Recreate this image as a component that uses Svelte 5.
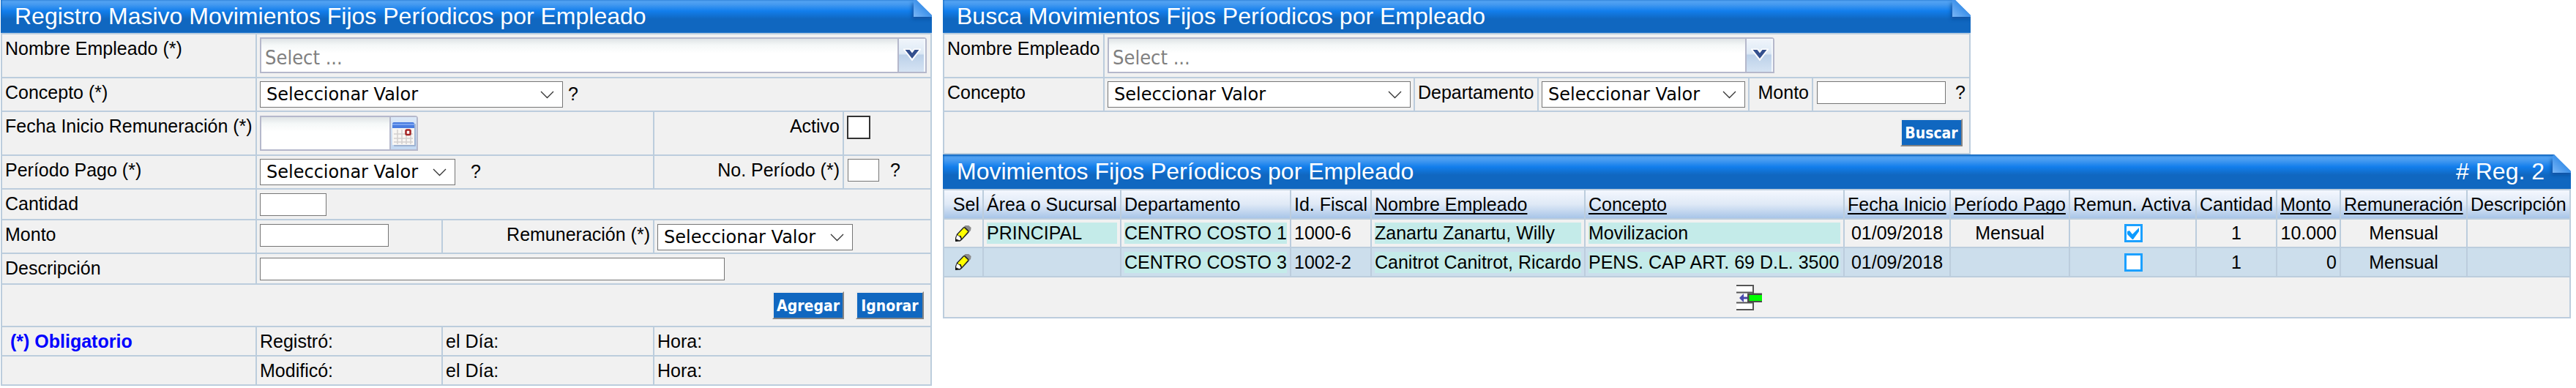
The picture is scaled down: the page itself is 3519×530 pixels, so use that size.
<script lang="ts">
  type Column = { key: string; label: string; sortable?: boolean; align?: string; marked?: boolean }

  const columns: Column[] = [
    { key: 'sucursal', label: 'Área o Sucursal', marked: true },
    { key: 'departamento', label: 'Departamento', marked: true },
    { key: 'fiscal', label: 'Id. Fiscal' },
    { key: 'empleado', label: 'Nombre Empleado', sortable: true, marked: true },
    { key: 'concepto', label: 'Concepto', sortable: true, marked: true },
    { key: 'inicio', label: 'Fecha Inicio', sortable: true, align: 'center' },
    { key: 'periodo', label: 'Período Pago', sortable: true, align: 'center' },
    { key: 'activa', label: 'Remun. Activa', align: 'center' },
    { key: 'cantidad', label: 'Cantidad', align: 'center' },
    { key: 'monto', label: 'Monto', sortable: true, align: 'right' },
    { key: 'remuneracion', label: 'Remuneración', sortable: true, align: 'center' },
    { key: 'descripcion', label: 'Descripción' },
  ]

  const rows: Record<string, string | boolean>[] = [
    {
      sucursal: 'PRINCIPAL', departamento: 'CENTRO COSTO 1', fiscal: '1000-6',
      empleado: 'Zanartu Zanartu, Willy', concepto: 'Movilizacion', inicio: '01/09/2018',
      periodo: 'Mensual', activa: true, cantidad: '1', monto: '10.000',
      remuneracion: 'Mensual', descripcion: '',
    },
    {
      sucursal: '', departamento: 'CENTRO COSTO 3', fiscal: '1002-2',
      empleado: 'Canitrot Canitrot, Ricardo', concepto: 'PENS. CAP ART. 69 D.L. 3500', inicio: '01/09/2018',
      periodo: '', activa: false, cantidad: '1', monto: '0',
      remuneracion: 'Mensual', descripcion: '',
    },
  ]
</script>

{#snippet fold()}
  <svg class="fold" width="42" height="40" viewBox="-17 0 42 40">
    <defs>
      <linearGradient id="fold-face" x1="1" y1="0" x2="0" y2="1">
        <stop offset="0.3" stop-color="#2b86e6" />
        <stop offset="1" stop-color="#7ab6f6" />
      </linearGradient>
      <filter id="fold-shadow" x="-50%" y="-50%" width="200%" height="200%">
        <feGaussianBlur stdDeviation="2.5" />
      </filter>
    </defs>
    <path d="M-2 5V28H25V22Z" fill="#084a94" opacity=".75" filter="url(#fold-shadow)" />
    <path d="M2 0H25V23Z" fill="#fff" />
    <path d="M0 2L2 0L25 23V25H0Z" fill="url(#fold-face)" />
  </svg>
{/snippet}

{#snippet dropdown(size: string)}
  <div class="select {size}" role="combobox" aria-expanded="false" aria-controls="values" tabindex="0">
    <span>Seleccionar Valor</span>
    <svg width="19" height="11" viewBox="0 0 19 11">
      <path d="M1 1L9.5 9.5L18 1" fill="none" stroke="#333" stroke-width="1.3" />
    </svg>
  </div>
{/snippet}

{#snippet combo()}
  <div class="combo">
    <span class="combo-text">Select ...</span>
    <span class="combo-arrow">
      <svg width="24" height="18" viewBox="0 0 24 18">
        <path d="M2 2H9L12 6L15 2H22L12 15Z" fill="#fff" stroke="#fff" stroke-width="3" />
        <path d="M2.5 2H8.5L12 6.5L15.5 2H21.5L12 14Z" fill="#34508e" />
      </svg>
    </span>
  </div>
{/snippet}

{#snippet pencil()}
  <svg width="24" height="24" viewBox="26 22 72 72">
    <path d="M62 32L70 25L84 25L94 34L92 46L84 54Z" fill="#8b8b8b" />
    <path d="M35 60L62 32L69 32L84 46V54L56 84L48 90H29V75Z" fill="#222" />
    <path d="M40 61L65 35L81 50L56 78L52 67L41 66Z" fill="#ffff00" />
    <path d="M36 65L47 71L52 81L46 86L32 80Z" fill="#fff" />
    <path d="M29 79L39 90H29Z" fill="#111" />
  </svg>
{/snippet}

<main class="page">
  <section class="panel">
    <h2 class="title clipped">Registro Masivo Movimientos Fijos Períodicos por Empleado{@render fold()}</h2>
    <div class="grid form">
      <div class="cell">Nombre Empleado (*)</div>
      <div class="cell field span4">{@render combo()}</div>

      <div class="cell">Concepto (*)</div>
      <div class="cell field span4 with-help">{@render dropdown('w-414')}<span class="help">?</span></div>

      <div class="cell">Fecha Inicio Remuneración (*)</div>
      <div class="cell field low span2">
        <div class="date">
          <span class="date-text"></span>
          <span class="date-button">
            <svg width="32" height="33" viewBox="0 0 32 33">
              <rect x="2" y="2" width="30" height="31" rx="1" fill="#8297bc" opacity=".6" />
              <rect x="0" y="0" width="30" height="31" fill="#f8f6f3" />
              <path d="M0 8H30V2Q30 0 28 0H2Q0 0 0 2Z" fill="#4a7de0" />
              <path d="M0 3H30" stroke="#7ba4f2" stroke-width="2" />
              <path d="M2 16H28M2 22H28M2 27H28M7 10V30M13 10V30M19 10V30M25 10V30" stroke="#d2d0cf" stroke-width="1.5" />
              <rect x="18.5" y="10.5" width="6" height="6.5" rx="1.5" fill="#fff" stroke="#a52424" stroke-width="2.5" />
            </svg>
          </span>
        </div>
      </div>
      <div class="cell right">Activo</div>
      <div class="cell field low"><span class="check-native"></span></div>

      <div class="cell">Período Pago (*)</div>
      <div class="cell field span2 with-help far">{@render dropdown('w-267')}<span class="help">?</span></div>
      <div class="cell right">No. Período (*)</div>
      <div class="cell field input-help"><span class="input w-43"></span><span class="help">?</span></div>

      <div class="cell">Cantidad</div>
      <div class="cell field low span4"><span class="input w-91"></span></div>

      <div class="cell">Monto</div>
      <div class="cell field low"><span class="input w-176"></span></div>
      <div class="cell right">Remuneración (*)</div>
      <div class="cell field low span2">{@render dropdown('w-267')}</div>

      <div class="cell">Descripción</div>
      <div class="cell field low span4"><span class="input w-635"></span></div>

      <div class="cell actions span5">
        <button class="btn">Agregar</button>
        <button class="btn w-93">Ignorar</button>
      </div>

      <div class="cell required">(*) Obligatorio</div>
      <div class="cell">Registró:</div>
      <div class="cell">el Día:</div>
      <div class="cell span2">Hora:</div>

      <div class="cell"></div>
      <div class="cell">Modificó:</div>
      <div class="cell">el Día:</div>
      <div class="cell span2">Hora:</div>
    </div>
  </section>

  <div class="side">
    <section class="panel search-panel">
      <h2 class="title clipped">Busca Movimientos Fijos Períodicos por Empleado{@render fold()}</h2>
      <div class="grid search">
        <div class="cell">Nombre Empleado</div>
        <div class="cell field span5">{@render combo()}</div>

        <div class="cell">Concepto</div>
        <div class="cell field">{@render dropdown('w-414')}</div>
        <div class="cell">Departamento</div>
        <div class="cell field">{@render dropdown('w-278')}</div>
        <div class="cell right">Monto</div>
        <div class="cell field input-help roomy"><span class="input w-176"></span><span class="help">?</span></div>

        <div class="cell actions span6">
          <button class="btn w-85">Buscar</button>
        </div>
      </div>
    </section>

    <section class="panel">
      <h2 class="title">Movimientos Fijos Períodicos por Empleado<span class="count"># Reg. 2</span>{@render fold()}</h2>
      <div class="grid results">
        <div class="cell head right">Sel</div>
        {#each columns as col}
          <div class="cell head"><span class:sortable={col.sortable}>{col.label}</span></div>
        {/each}

        {#each rows as row, i}
          <div class="cell data center" class:alt={i % 2 === 1}>{@render pencil()}</div>
          {#each columns as col}
            <div class="cell data {col.align ?? ''}" class:alt={i % 2 === 1}>
              {#if col.key === 'activa'}
                <span class="check">
                  {#if row.activa}
                    <svg width="19" height="19" viewBox="0 0 19 19">
                      <path d="M1 7L4 6L8 11L17 2V7L9 18H8L1 11Z" fill="#0d9bff" />
                    </svg>
                  {/if}
                </span>
              {:else if col.marked && row[col.key]}
                <span class="marked">{row[col.key]}</span>
              {:else}
                <span>{row[col.key]}</span>
              {/if}
            </div>
          {/each}
        {/each}

        <div class="cell foot">
          <svg width="35" height="35" viewBox="0 0 35 35">
            <path d="M0 1H23V34H0V24H23V11H0Z" fill="#fff" />
            <path d="M0 1H23V10.500H0M0 34H23V24.500H0M23 10V25" fill="none" stroke="#555" stroke-width="2" />
            <path d="M10 12H15V23H10Z" fill="#fff" />
            <path d="M4 18L10 12V16.500H16V19.500H10V24Z" fill="#4a49ac" />
            <rect x="15" y="11.5" width="22" height="12.5" fill="#4a4a4a" />
            <rect x="17.5" y="14" width="20" height="8" fill="#00ff00" />
          </svg>
        </div>
      </div>
    </section>
  </div>
</main>

<style>
  :global(body) { background: #fff; }

  .page {
    display: grid;
    grid-template-columns: 1272px 2224px;
    gap: 15px;
    align-items: start;
    padding-left: 1px;
    font: 25px/28px "Liberation Sans", Arial, sans-serif;
    color: #000;
    white-space: nowrap;
  }
  .search-panel { width: 1404px; }

  /* title bars */
  .title {
    position: relative;
    overflow: hidden;
    box-sizing: border-box;
    display: flex;
    justify-content: space-between;
    height: 47px;
    margin: 0;
    padding: 0 36px 0 19px;
    background: linear-gradient(#1067c0 0, #1067c0 1px, #3487dc 2px, #52a2f2 4px, #459af0 8px, #127eec 17px, #1067c0 28px);
    box-shadow: inset 2px 0 #1067c080;
    color: #fff;
    font-size: 32px;
    font-weight: normal;
    line-height: 46px;
  }
  .title.clipped {
    height: 45px;
    background-position: 0 -2px;
    line-height: 44px;
  }
  .fold {
    position: absolute;
    top: 0;
    right: 0;
  }
  .clipped .fold { top: -2px; }

  /* bordered grids */
  .grid {
    display: grid;
    gap: 2px;
    padding: 2px;
    background: #bccddd;
  }
  .form {
    grid-template-columns: 346px 252px 287px 257px 118px;
    grid-template-rows: 58px 44px 58px 44px 40px 44px 40px 56px 38px 38px;
  }
  .search {
    grid-template-columns: 217px 422px 167px 286px 85px 213px;
    grid-template-rows: 58px 44px 56px;
  }
  .results {
    grid-template-columns: 52px 186px 230px 108px 290px 352px 143px 161px 171px 108px 85px 171px 139px;
    grid-template-rows: 38px 37px 38px 54px;
  }
  .cell {
    box-sizing: border-box;
    min-width: 0;
    padding: 5px 4px 0;
    background: #f1f1f1;
  }
  .span2 { grid-column: span 2; }
  .span4 { grid-column: span 4; }
  .span5 { grid-column: span 5; }
  .span6 { grid-column: span 6; }
  .right { text-align: right; }
  .required {
    padding-left: 11px;
    color: #0000ff;
    font-weight: bold;
  }

  /* controls */
  .field {
    display: flex;
    align-items: flex-start;
    padding-top: 4px;
  }
  .low { padding-top: 5px; }
  .with-help {
    align-items: baseline;
    gap: 7px;
  }
  .far { gap: 21px; }
  .input-help {
    gap: 15px;
    padding-left: 5px;
  }
  .roomy { gap: 13px; }
  .input-help .help { line-height: 31px; }

  .select {
    box-sizing: border-box;
    display: flex;
    align-items: center;
    justify-content: space-between;
    height: 36px;
    padding: 0 11px 0 8px;
    border: 1px solid #767676;
    background: #fff;
    font-family: "DejaVu Sans", Verdana, sans-serif;
    font-size: 24px;
  }
  .input {
    box-sizing: border-box;
    height: 31px;
    border: 1px solid #767676;
    background: #fff;
  }
  .w-43 { width: 43px; }
  .w-85 { width: 85px; }
  .w-91 { width: 91px; }
  .w-93 { width: 93px; }
  .w-176 { width: 176px; }
  .w-267 { width: 267px; }
  .w-278 { width: 278px; }
  .w-414 { width: 414px; }
  .w-635 { width: 635px; }

  .combo, .date {
    box-sizing: border-box;
    display: flex;
    border: 2px solid #b5b8cb;
    border-top-right-radius: 4px;
    background: linear-gradient(#dfe4e6, #f5f8f8 9px, #fff 20px);
  }
  .combo {
    width: 911px;
    height: 49px;
  }
  .combo-text {
    flex: 1;
    padding: 12px 0 0 5px;
    color: #808080;
    font-family: "DejaVu Sans Condensed", Tahoma, sans-serif;
    font-size: 27px;
  }
  .combo-arrow {
    box-sizing: border-box;
    display: flex;
    justify-content: center;
    align-items: flex-start;
    width: 38px;
    padding-top: 13px;
    border-left: 2px solid #b5b8cb;
    background: linear-gradient(#f0f5fb 0, #dde9f5 45%, #bcd1e9 50%, #d5e3f3 100%);
    box-shadow: inset -2px 1px #f4f8fc;
  }
  .date {
    width: 216px;
    height: 48px;
  }
  .date-text { flex: 1; }
  .date-button {
    box-sizing: border-box;
    width: 37px;
    padding: 7px 0 0 2px;
    border-left: 2px solid #b5b8cb;
    background: linear-gradient(#dce8f7, #c3d8f1);
  }
  .check-native {
    box-sizing: border-box;
    width: 32px;
    height: 32px;
    border: 2px solid #333;
    background: #fff;
  }

  .actions {
    display: flex;
    justify-content: flex-end;
    gap: 16px;
    padding: 9px 9px 0;
  }
  .btn {
    box-sizing: border-box;
    height: 38px;
    padding: 1px 4px 0;
    border: 2px solid;
    border-color: #ececec #848484 #848484 #ececec;
    background: #1067c0;
    color: #fff;
    font: bold 21px/32px "DejaVu Sans Condensed", Tahoma, sans-serif;
  }

  /* results */
  .head { background: linear-gradient(#f4f7fe, #dfe9f6 50%, #a8c5e8); }
  .sortable {
    text-decoration: underline;
    text-decoration-thickness: 2px;
    text-underline-offset: 3px;
    text-decoration-skip-ink: none;
  }
  .data {
    display: flex;
    align-items: center;
    padding: 0 4px;
    line-height: 29px;
  }
  .data.center { justify-content: center; }
  .data.right { justify-content: flex-end; }
  .alt { background: #ccdeec; }
  .marked {
    flex: 1;
    background: #c4ebe9;
  }
  .check {
    box-sizing: border-box;
    display: flex;
    width: 25px;
    height: 25px;
    margin-left: 2px;
    border: 3px solid #1ba0ff;
    background: #fff;
  }
  .foot {
    grid-column: 1 / -1;
    display: flex;
    justify-content: center;
    padding-top: 10px;
    padding-right: 25px;
  }
</style>
